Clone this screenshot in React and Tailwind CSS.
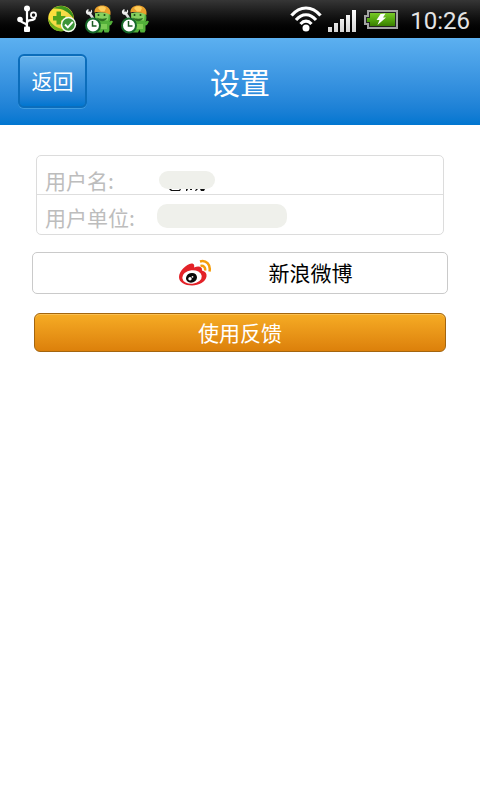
function UsbIcon() {
  return (
    <svg className="h-[28px] w-[22px]" viewBox="0 0 22 28" fill="none" stroke="#fff" strokeWidth="2.200">
      <path d="M10 4v19M10 21c0-4-7-2-7-7M10 18c0-5 7-1 8-5" />
      <circle cx="10" cy="3.500" r="3" fill="#fff" stroke="none" />
      <circle cx="3" cy="14.500" r="2.800" fill="#fff" stroke="none" />
      <circle cx="16.500" cy="10" r="2.600" strokeWidth="1.700" />
      <rect x="7" y="21.500" width="6" height="5.500" rx="1" fill="#fff" stroke="none" />
    </svg>
  );
}

function ShieldIcon() {
  return (
    <svg className="h-[28px] w-[30px]" viewBox="0 0 30 28">
      <defs>
        <linearGradient id="ball" x1="0" y1="0" x2="1" y2="1">
          <stop offset="0" stopColor="#ffe22e" />
          <stop offset=".5" stopColor="#f4dc4a" />
          <stop offset="1" stopColor="#dcae08" />
        </linearGradient>
        <linearGradient id="leaf" x1="0" y1="0" x2="1" y2="1">
          <stop offset="0" stopColor="#4d9c1c" />
          <stop offset="1" stopColor="#2f8a1a" />
        </linearGradient>
      </defs>
      <circle cx="14" cy="13.500" r="12.800" fill="url(#ball)" />
      <path d="M6 3.500C12-1 22 0 26 9.500l.5 4C21 6 15 3 6 3.500Z" fill="url(#leaf)" />
      <path d="M1.200 13C5 20 10 24 20 24.800 11 29 2 24 1.200 13Z" fill="#6fb01c" />
      <path d="M9.500 6.500h4.500v4.500h4.500v4.500h-4.500v4h-4.500v-4H6v-4.500h3.500Z" fill="#4fa31c" />
      <circle cx="21.500" cy="19.500" r="7.700" fill="#f5fff0" />
      <circle cx="21.500" cy="19.500" r="6.200" fill="#3d9438" />
      <path d="m18 19.500 2.800 2.800 5-5.500" fill="none" stroke="#fff" strokeWidth="1.900" />
    </svg>
  );
}

function WorkerIcon() {
  return (
    <svg className="h-[29px] w-[28px]" viewBox="0 0 28 29">
      <path d="M10 8h14.500c1.500 4 1 7 0 9l1.500-1.500 2 1-2 3.500-1.500.5v5l-1 2h-4l-1-3-1.500 3H12l-2-7Z" fill="#53b03a" />
      <path d="M10 8.500c4-1.500 9-2 14 0l-1 7H11Z" fill="#86d05f" />
      <path d="M11.500 12.500c3 1.500 7 1.500 10.500.5-1 4-8 4.500-10.500-.5Z" fill="#2c6f20" />
      <path d="M15 19h7v5h-7Z" fill="#7ccb55" />
      <circle cx="13.500" cy="10" r="1" fill="#174d14" />
      <circle cx="19.500" cy="10" r="1" fill="#174d14" />
      <path d="M9.500 7.500C9 3 13 .5 17 .5c5 0 8 2.500 8.500 6.500v3c-4-2.500-10-3.500-16-2.500Z" fill="#e9a02c" />
      <path d="M13 3C15 .5 19 .5 21 3l-1.500 3.500H16Z" fill="#ffce5c" />
      <path d="m3.500 7 3 4L9 15" fill="none" stroke="#dcdcdc" strokeWidth="2.600" />
      <path d="M3.500 4c-2 .5-3 2-2.500 4 1 2 3.500 2.500 5 1s1.500-3.500.3-4.500L5.500 7 3.500 7Z" fill="#ededed" />
      <circle cx="8" cy="20.500" r="7" fill="#fff" stroke="#17692a" strokeWidth="2" />
      <path d="M7.500 16v5h4" fill="none" stroke="#1b5c24" strokeWidth="1.500" />
    </svg>
  );
}

function WifiIcon() {
  return (
    <svg className="h-[26px] w-[32px]" viewBox="0 0 32 26" fill="none" stroke="#fff" strokeWidth="3.200">
      <path d="M1.500 9.500C10-.5 22-.5 30.500 9.500M6 14c6-7 14-7 20 0M10.500 18c3.500-3.800 7.500-3.800 11 0" />
      <circle cx="16" cy="22" r="3.500" fill="#fff" stroke="none" />
    </svg>
  );
}

function SignalIcon() {
  return (
    <svg className="h-[22px] w-[28px]" viewBox="0 0 28 22">
      <defs>
        <linearGradient id="bars" x1="0" y1="0" x2="0" y2="22" gradientUnits="userSpaceOnUse">
          <stop offset="0" stopColor="#fff" />
          <stop offset="1" stopColor="#d4d4d4" />
        </linearGradient>
      </defs>
      <path d="M0 17h4v5H0ZM6 13h4v9H6ZM12 9h4v13h-4ZM18 5h4v17h-4ZM24 0h4v22h-4Z" fill="url(#bars)" />
    </svg>
  );
}

function BatteryIcon() {
  return (
    <svg className="h-[19px] w-[34px]" viewBox="0 0 34 19">
      <defs>
        <linearGradient id="charge" x1="0" y1="0" x2="0" y2="1">
          <stop offset="0" stopColor="#79c928" />
          <stop offset=".5" stopColor="#55a80f" />
          <stop offset="1" stopColor="#397d00" />
        </linearGradient>
      </defs>
      <path d="M4 1h29v17H4v-4H1V6h3Z" fill="#222" stroke="#a3a3a3" strokeWidth="2" />
      <path d="M6 3h25v13H6v-4H3V8h3Z" fill="url(#charge)" />
      <path d="m16.500 4 5-.5-2.500 4h3L13.500 15l2-5h-3Z" fill="#fff" />
    </svg>
  );
}

function WeiboIcon() {
  return (
    <svg className="h-[28px] w-[34px]" viewBox="0 0 34 28">
      <path d="M1 18C1 12 8.500 5 13.500 4.500c3 0 3 2.500 2.500 4 4-1.500 8.500-1.500 8 3 3.500 1 5 3 4.500 6C27.500 23 21 26.500 14 26.500S1 23.500 1 18Z" fill="#e32228" />
      <ellipse cx="14" cy="18" rx="9.800" ry="6.800" transform="rotate(-6 14 18)" fill="#fff" />
      <ellipse cx="13.500" cy="18.800" rx="5.600" ry="4.800" transform="rotate(-20 13.500 18.800)" fill="#0a0a0a" />
      <circle cx="12" cy="19.800" r="1.700" fill="#fff" />
      <circle cx="14.500" cy="17.800" r=".9" fill="#fff" />
      <path d="M22 2.500c6-1.800 11 3 9.500 10M22.500 7c3-.8 5.300 1.500 4.500 4.500" fill="none" stroke="#f59d0a" strokeWidth="2.500" />
    </svg>
  );
}

function StatusBar() {
  return (
    <div className="flex h-[38px] items-center justify-between bg-linear-to-b from-[#363636] to-black pr-[10px] pl-[17px]">
      <div className="flex items-center gap-2">
        <UsbIcon />
        <ShieldIcon />
        <WorkerIcon />
        <WorkerIcon />
      </div>
      <div className="flex items-center">
        <WifiIcon />
        <div className="mt-1 ml-[6px]">
          <SignalIcon />
        </div>
        <div className="mr-3 ml-2">
          <BatteryIcon />
        </div>
        <time className="pt-1 font-[Roboto,sans-serif] text-2xl leading-8 text-[#e4e4e4]">10:26</time>
      </div>
    </div>
  );
}

export default function App() {
  return (
    <div className="min-h-screen bg-white font-['Noto_Sans_CJK_SC',sans-serif] text-[21px] leading-8">
      <StatusBar />
      <header className="grid h-[87px] grid-cols-[1fr_auto_1fr] items-center bg-linear-to-b from-[#5cb0f0] to-[#0076d0] px-[18px] pb-[2px]">
        <button
          type="button"
          className="h-[54px] w-[69px] rounded-md border-2 border-[#0b6dbb] bg-linear-to-b from-[#64b2ec] to-[#0076d0] pb-[2px] text-white shadow-[0_1px_0_#3f9ce0,inset_0_1px_0_#7fc0f0]"
        >
          返回
        </button>
        <h1 className="text-[30px] leading-10 text-white">设置</h1>
      </header>
      <main className="px-8 pt-[30px]">
        <dl className="mx-1 divide-y divide-[#dedede] rounded-[5px] border border-[#dcdcdc] text-[#bdbdbd]">
          <div className="flex h-[39px] items-start pt-2 pl-2">
            <dt className="w-[114px]">用户名:</dt>
            <dd className="pt-[7px]">
              <div className="h-[18px] w-14 rounded-full bg-[#eff0eb]" />
              <svg className="ml-[10px] h-[2px] w-[38px]" viewBox="0 0 38 2" fill="#111">
                <path d="M0 0h2l1 1h7l1-1h1l-1 2H2ZM17 0h2l-1 2h-1ZM21 0h2v1h-2ZM27 0h2l-2 2h-1ZM31 0h5l-1 2h-3Z" />
              </svg>
            </dd>
          </div>
          <div className="flex h-[39px] items-start pt-[6px] pl-2">
            <dt className="w-28">用户单位:</dt>
            <dd className="pt-[3px]">
              <div className="h-6 w-[130px] rounded-[10px] bg-[#eff0eb]" />
            </dd>
          </div>
        </dl>
        <button
          type="button"
          className="mt-[17px] flex h-[42px] w-full items-center justify-center gap-[57px] rounded-[5px] border border-[#cacaca] bg-white pl-[50px] text-black"
        >
          <WeiboIcon />
          <span className="pb-[2px]">新浪微博</span>
        </button>
        <div className="mx-[2px] mt-[19px]">
          <button
            type="button"
            className="block h-[39px] w-full rounded-md border border-[#a3650f] bg-linear-to-b from-[#f6ac24] to-[#dc800a] pb-[2px] text-white shadow-[inset_0_1px_0_#fac052]"
          >
            使用反馈
          </button>
        </div>
      </main>
    </div>
  );
}
